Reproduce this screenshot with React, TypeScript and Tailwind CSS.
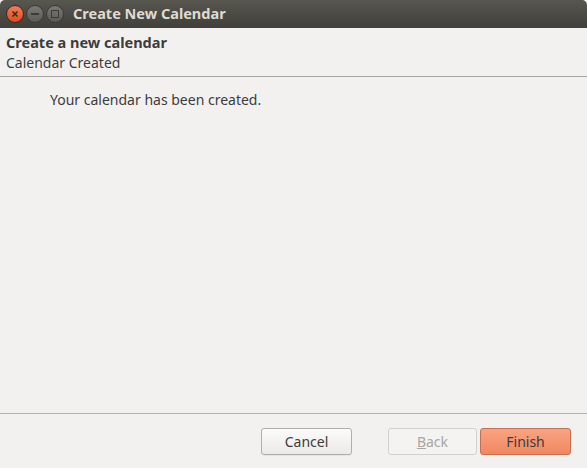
export default function App() {
  const font = { fontFamily: '"Noto Sans", "DejaVu Sans", sans-serif' };
  return (
    <div className="w-[587px] h-[468px] flex flex-col bg-[#f2f1f0] text-[#3c3c3c] overflow-hidden" style={font}>
      <div className="h-[28px] flex items-center bg-gradient-to-b from-[#57564f] to-[#403f3b] rounded-t-[5px] pl-[6px]">
        <div className="flex items-center gap-[1px]">
          <div className="w-[18px] h-[18px] rounded-full bg-gradient-to-b from-[#f77b54] to-[#df4a16] border border-[#3a2a24] flex items-center justify-center">
            <svg width="8" height="8" viewBox="0 0 8 8"><path d="M1.5 1.5L6.5 6.5M6.5 1.5L1.5 6.5" stroke="#3b2a20" strokeWidth="1.6" /></svg>
          </div>
          <div className="w-[18px] h-[18px] rounded-full bg-gradient-to-b from-[#7b7a74] to-[#5b5a55] border border-[#3a3935] flex items-center justify-center ml-[1px]">
            <div className="w-[8px] h-[2px] bg-[#3c3b37]" />
          </div>
          <div className="w-[18px] h-[18px] rounded-full bg-gradient-to-b from-[#7b7a74] to-[#5b5a55] border border-[#3a3935] flex items-center justify-center ml-[1px]">
            <div className="w-[8px] h-[8px] border-[1.5px] border-[#3c3b37]" />
          </div>
        </div>
        <div className="ml-[9px] text-[14.5px] font-bold text-[#dfdbd2]">Create New Calendar</div>
      </div>
      <div className="h-[49px] border-b border-[#a6a49f] px-[6px] pt-[5px] flex flex-col">
        <div className="text-[14.5px] font-bold leading-[19px]">Create a new calendar</div>
        <div className="text-[14px] leading-[21px]">Calendar Created</div>
      </div>
      <div className="flex-1 pl-[50px] pt-[12px] text-[14px]">Your calendar has been created.</div>
      <div className="h-[55px] border-t border-[#b5b3ae] flex items-start pt-[14px] pr-[16px] justify-end">
        <button className="w-[91px] h-[27px] rounded-[3px] border border-[#b0aea9] bg-gradient-to-b from-[#fbfbfa] to-[#eceae8] text-[14px] text-[#3c3c3c] flex items-center justify-center shadow-[0_1px_0_rgba(0,0,0,0.05)]">Cancel</button>
        <button className="ml-[36px] w-[89px] h-[27px] rounded-[3px] border border-[#d3d1cc] bg-[#f4f3f2] text-[14px] text-[#a8a6a2] flex items-center justify-center"><span className="underline">B</span>ack</button>
        <button className="ml-[3px] w-[91px] h-[27px] rounded-[3px] border border-[#c56f4e] bg-gradient-to-b from-[#f9a383] to-[#f08860] text-[14px] text-[#3c3c3c] flex items-center justify-center">Finish</button>
      </div>
    </div>
  );
}
